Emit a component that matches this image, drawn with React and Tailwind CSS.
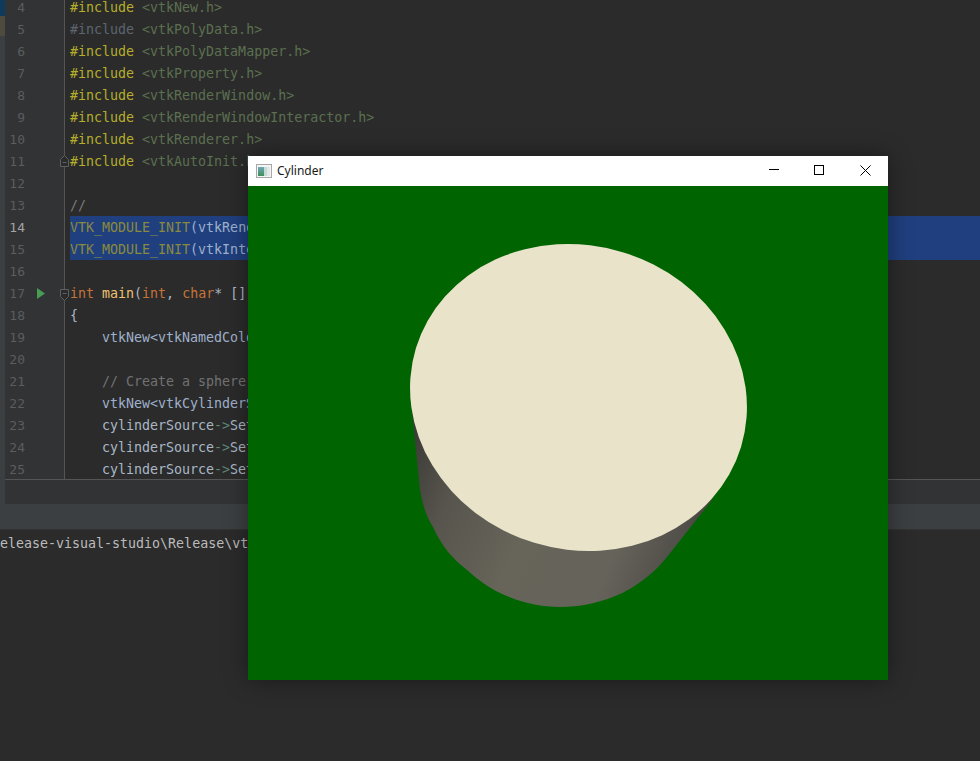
import React from 'react';

const inc = (name, dim) => (
  <>
    <span className={dim ? 'text-[#5c6570]' : 'text-[#b5ae2b]'}>#include</span>
    <span className="text-[#5b7050]"> &lt;{name}&gt;</span>
  </>
);

const blue = 'text-[#9fb0cc]';
const orange = 'text-[#c8733a]';
const arrow = <span className="text-[#5f8a78]">-&gt;</span>;

const lines = [
  { n: 4, code: inc('vtkNew.h') },
  { n: 5, code: inc('vtkPolyData.h', true) },
  { n: 6, code: inc('vtkPolyDataMapper.h') },
  { n: 7, code: inc('vtkProperty.h') },
  { n: 8, code: inc('vtkRenderWindow.h') },
  { n: 9, code: inc('vtkRenderWindowInteractor.h') },
  { n: 10, code: inc('vtkRenderer.h') },
  { n: 11, code: inc('vtkAutoInit.h'), fold: 'top' },
  { n: 12 },
  { n: 13, code: <span className="text-[#7a7a7a]">//</span> },
  {
    n: 14,
    selected: true,
    current: true,
    code: (
      <>
        <span className="text-[#8a8a3c]">VTK_MODULE_INIT</span>
        <span className={blue}>(vtkRenderingOpenGL2)</span>
      </>
    ),
  },
  {
    n: 15,
    selected: true,
    code: (
      <>
        <span className="text-[#8a8a3c]">VTK_MODULE_INIT</span>
        <span className={blue}>(vtkInteractionStyle)</span>
      </>
    ),
  },
  { n: 16 },
  {
    n: 17,
    run: true,
    fold: 'bottom',
    code: (
      <>
        <span className={orange}>int </span>
        <span className="text-[#f0c070]">main</span>
        <span className="text-[#a9b7c6]">(</span>
        <span className={orange}>int</span>
        <span className="text-[#a9b7c6]">, </span>
        <span className={orange}>char</span>
        <span className="text-[#a9b7c6]">* []</span>
      </>
    ),
  },
  { n: 18, code: <span className="text-[#a9b7c6]">{'{'}</span> },
  { n: 19, code: <span className={`pl-8 ${blue}`}>vtkNew&lt;vtkNamedColors&gt;</span> },
  { n: 20 },
  { n: 21, code: <span className="pl-8 text-[#727272]">// Create a sphere</span> },
  { n: 22, code: <span className={`pl-8 ${blue}`}>vtkNew&lt;vtkCylinderSource&gt;</span> },
  { n: 23, code: <span className="pl-8 text-[#a9b7c6]">cylinderSource{arrow}SetCenter</span> },
  { n: 24, code: <span className="pl-8 text-[#a9b7c6]">cylinderSource{arrow}SetRadius</span> },
  { n: 25, code: <span className="pl-8 text-[#a9b7c6]">cylinderSource{arrow}SetHeight</span> },
];

const FoldMark = ({ kind }) =>
  kind === 'top' ? (
    <svg className="absolute right-[-5px] top-[5px] z-10" width="9" height="12" viewBox="0 0 9 12" fill="#2b2b2b" stroke="#5d6063">
      <path d="M.5 11.500h8V4.500L4.500 .5 .5 4.500z M2.500 7.500h4" />
    </svg>
  ) : (
    <svg className="absolute right-[-5px] top-[7px] z-10" width="9" height="12" viewBox="0 0 9 12" fill="#2b2b2b" stroke="#5d6063">
      <path d="M.5 .5h8v7l-4 4-4-4z M2.500 4.500h4" />
    </svg>
  );

const CodeLine = ({ line }) => (
  <div className="flex h-[22px] shrink-0 leading-[24px]">
    <div className={`relative flex w-[60px] shrink-0 border-r border-[#555555] bg-[#313335] ${line.current ? 'text-[#a4a3a3]' : 'text-[#5b5d5f]'}`}>
      <span className="w-[20px] text-right text-[13px]">{line.n}</span>
      {line.run && (
        <svg className="absolute left-[31px] top-[6px]" width="10" height="11" viewBox="0 0 10 11">
          <path d="M1 0l8 5.500-8 5.500z" fill="#499c54" />
        </svg>
      )}
      {line.fold && <FoldMark kind={line.fold} />}
    </div>
    <div className={`ml-[5px] flex-1 whitespace-pre ${line.selected ? 'bg-[#203f7e]' : ''}`}>{line.code}</div>
  </div>
);

const Cylinder = () => (
  <svg className="block" width="640" height="494" viewBox="248 186 640 494">
    <defs>
      <linearGradient id="side" gradientUnits="userSpaceOnUse" x1="412" y1="450" x2="702" y2="570">
        <stop offset="0" stopColor="#3f3d39" />
        <stop offset="0.16" stopColor="#56544c" />
        <stop offset="0.42" stopColor="#67655a" />
        <stop offset="0.72" stopColor="#65635a" />
        <stop offset="0.9" stopColor="#514f49" />
        <stop offset="1" stopColor="#373532" />
      </linearGradient>
    </defs>
    <path
      d="M412 410 L420 490 C423 507 427 518 433 527 C442 547 453 559 467 570 C478 580 488 587 500 593 C519 602 539 607 560 607 C580 607 597 603 613 597 C626 592 637 585 647 577 C655 571 661 564 667 557 L712 500 L600 400 Z"
      fill="url(#side)"
    />
    <ellipse cx="578.500" cy="397.500" rx="169.900" ry="151.900" transform="rotate(16.900 578.500 397.500)" fill="#e9e3ca" />
  </svg>
);

const App = () => {
  return (
    <div className="relative flex h-[761px] w-[980px] flex-col overflow-hidden bg-[#2b2b2b] font-['DejaVu_Sans_Mono',monospace] text-[13.3px]">
      <div className="flex h-[504px] shrink-0">
        <div className="flex w-[5px] shrink-0 flex-col bg-[#3c3f41]">
          <div className="h-[16px] bg-[#0f3a5c]" />
          <div className="h-[20px] bg-[#4f4a3e]" />
        </div>
        <div className="flex min-w-0 flex-1 flex-col">
          <div className="h-[479px] shrink-0 overflow-hidden">
            <div className="-mt-[4px] flex flex-col">
              {lines.map((line) => (
                <CodeLine key={line.n} line={line} />
              ))}
            </div>
          </div>
          <div className="h-px shrink-0 bg-[#555555]" />
          <div className="flex-1 bg-[#313335]" />
        </div>
      </div>
      <div className="h-[26px] shrink-0 border-b border-[#323232] bg-[#3c3f41]" />
      <div className="flex-1 whitespace-pre pt-[3px] leading-[22px] text-[#bbbbbb]">elease-visual-studio\Release\vtkCylinder.exe</div>

      <div className="absolute left-[248px] top-[156px] w-[640px] shadow-[0_0_22px_rgba(0,0,0,0.4)]">
        <div className="flex h-[30px] items-center bg-white font-['Noto_Sans',sans-serif] text-[12px] text-[#1a1a1a]">
          <svg className="ml-[8px]" width="16" height="14" viewBox="0 0 16 14">
            <defs>
              <linearGradient id="icon" x1="0" y1="0" x2="0" y2="1">
                <stop offset="0" stopColor="#6fa8b8" />
                <stop offset="1" stopColor="#3f8f5a" />
              </linearGradient>
            </defs>
            <rect x="0.500" y="0.500" width="15" height="13" fill="#f4f4f4" stroke="#a8a8a8" />
            <rect x="2" y="3" width="6" height="9" fill="url(#icon)" />
            <rect x="8" y="3" width="3" height="9" fill="#c4dcd6" />
            <rect x="11" y="3" width="3" height="9" fill="#e6e6e6" />
          </svg>
          <span className="ml-[5px]">Cylinder</span>
          <div className="ml-auto flex h-full">
            <div className="flex w-[46px] items-center justify-center pb-[2px] pl-[2px]">
              <svg width="10" height="10" viewBox="0 0 10 10" stroke="#000" fill="none">
                <path d="M0 4.500h10" />
              </svg>
            </div>
            <div className="flex w-[46px] items-center justify-center pb-[2px]">
              <svg width="10" height="10" viewBox="0 0 10 10" stroke="#000" fill="none">
                <rect x="0.500" y="0.500" width="9" height="9" />
              </svg>
            </div>
            <div className="flex w-[46px] items-center justify-center pb-[2px]">
              <svg width="11" height="11" viewBox="0 0 11 11" stroke="#000" fill="none">
                <path d="M.5 .5l10 10M10.500 .5l-10 10" />
              </svg>
            </div>
          </div>
        </div>
        <div className="bg-[#006400]">
          <Cylinder />
        </div>
      </div>
    </div>
  );
};

export default App;
